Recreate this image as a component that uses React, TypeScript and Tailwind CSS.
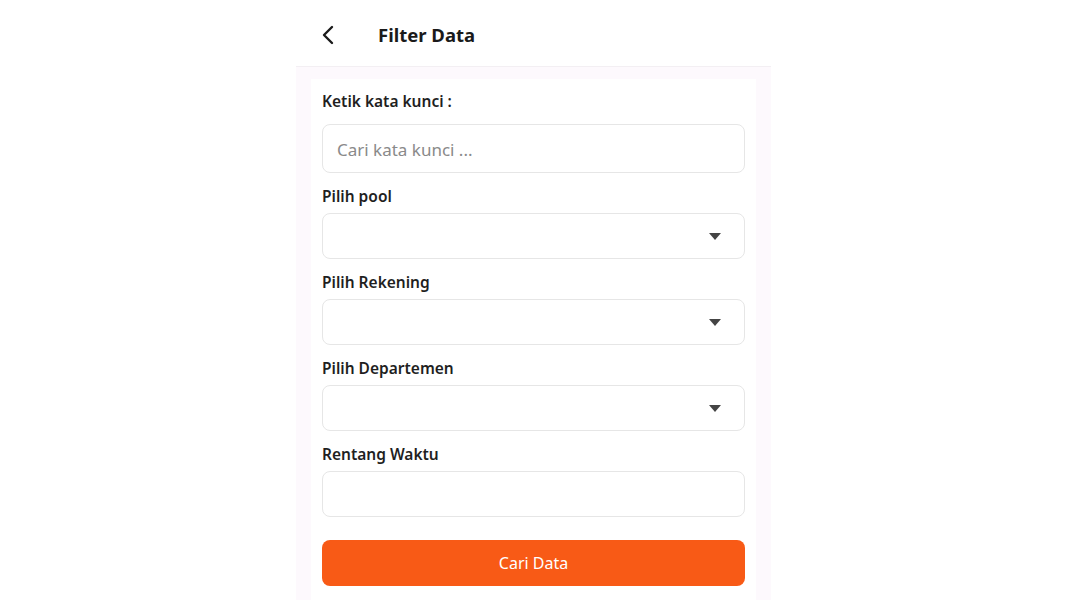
import React from "react";

const font = { fontFamily: '"Noto Sans", "Open Sans", sans-serif' };

function Caret() {
  return (
    <svg width="12" height="7" viewBox="0 0 12 7" className="text-[#444]">
      <path d="M0 0 L12 0 L6 7 Z" fill="currentColor" />
    </svg>
  );
}

function Label({ children }: { children: React.ReactNode }) {
  return (
    <div className="text-[15.5px] font-semibold leading-[20px] text-[#1f1f1f]">
      {children}
    </div>
  );
}

function SelectBox() {
  return (
    <div className="flex h-[46px] items-center justify-end rounded-lg border border-[#e6e6e6] bg-white pr-[23px]">
      <Caret />
    </div>
  );
}

export default function App() {
  return (
    <div className="flex min-h-screen justify-center bg-white" style={font}>
      <div className="flex w-[475px] flex-col">
        {/* Header */}
        <div className="flex h-[67px] items-center border-b border-[#f3eff3] bg-white pl-[25px] pt-[4px]">
          <svg width="14" height="20" viewBox="0 0 14 20" fill="none">
            <path
              d="M11 2 L3 10 L11 18"
              stroke="#1a1a1a"
              strokeWidth="2.4"
              strokeLinecap="round"
              strokeLinejoin="round"
            />
          </svg>
          <div className="ml-[43px] text-[18.5px] font-bold text-[#1a1a1a]">
            Filter Data
          </div>
        </div>

        {/* Body */}
        <div className="flex-1 bg-[#fdf9fd] px-[15px] pt-[12px]">
          <div className="flex flex-col bg-white px-[11px] pb-[15px] pt-[12px]">
            <Label>Ketik kata kunci :</Label>
            <div className="mt-[13px] flex h-[49px] items-center rounded-lg border border-[#e6e6e6] bg-white px-[14px] pt-[2px] text-[17px] text-[#8a8a8a]">
              Cari kata kunci ...
            </div>

            <div className="mt-[13px]">
              <Label>Pilih pool</Label>
            </div>
            <div className="mt-[7px]">
              <SelectBox />
            </div>

            <div className="mt-[13px]">
              <Label>Pilih Rekening</Label>
            </div>
            <div className="mt-[7px]">
              <SelectBox />
            </div>

            <div className="mt-[13px]">
              <Label>Pilih Departemen</Label>
            </div>
            <div className="mt-[7px]">
              <SelectBox />
            </div>

            <div className="mt-[13px]">
              <Label>Rentang Waktu</Label>
            </div>
            <div className="mt-[7px] h-[46px] rounded-lg border border-[#e6e6e6] bg-white" />

            <button className="mt-[23px] flex h-[46px] items-center justify-center rounded-lg bg-[#f85a16] text-[16px] text-white">
              Cari Data
            </button>
          </div>
        </div>
      </div>
    </div>
  );
}
